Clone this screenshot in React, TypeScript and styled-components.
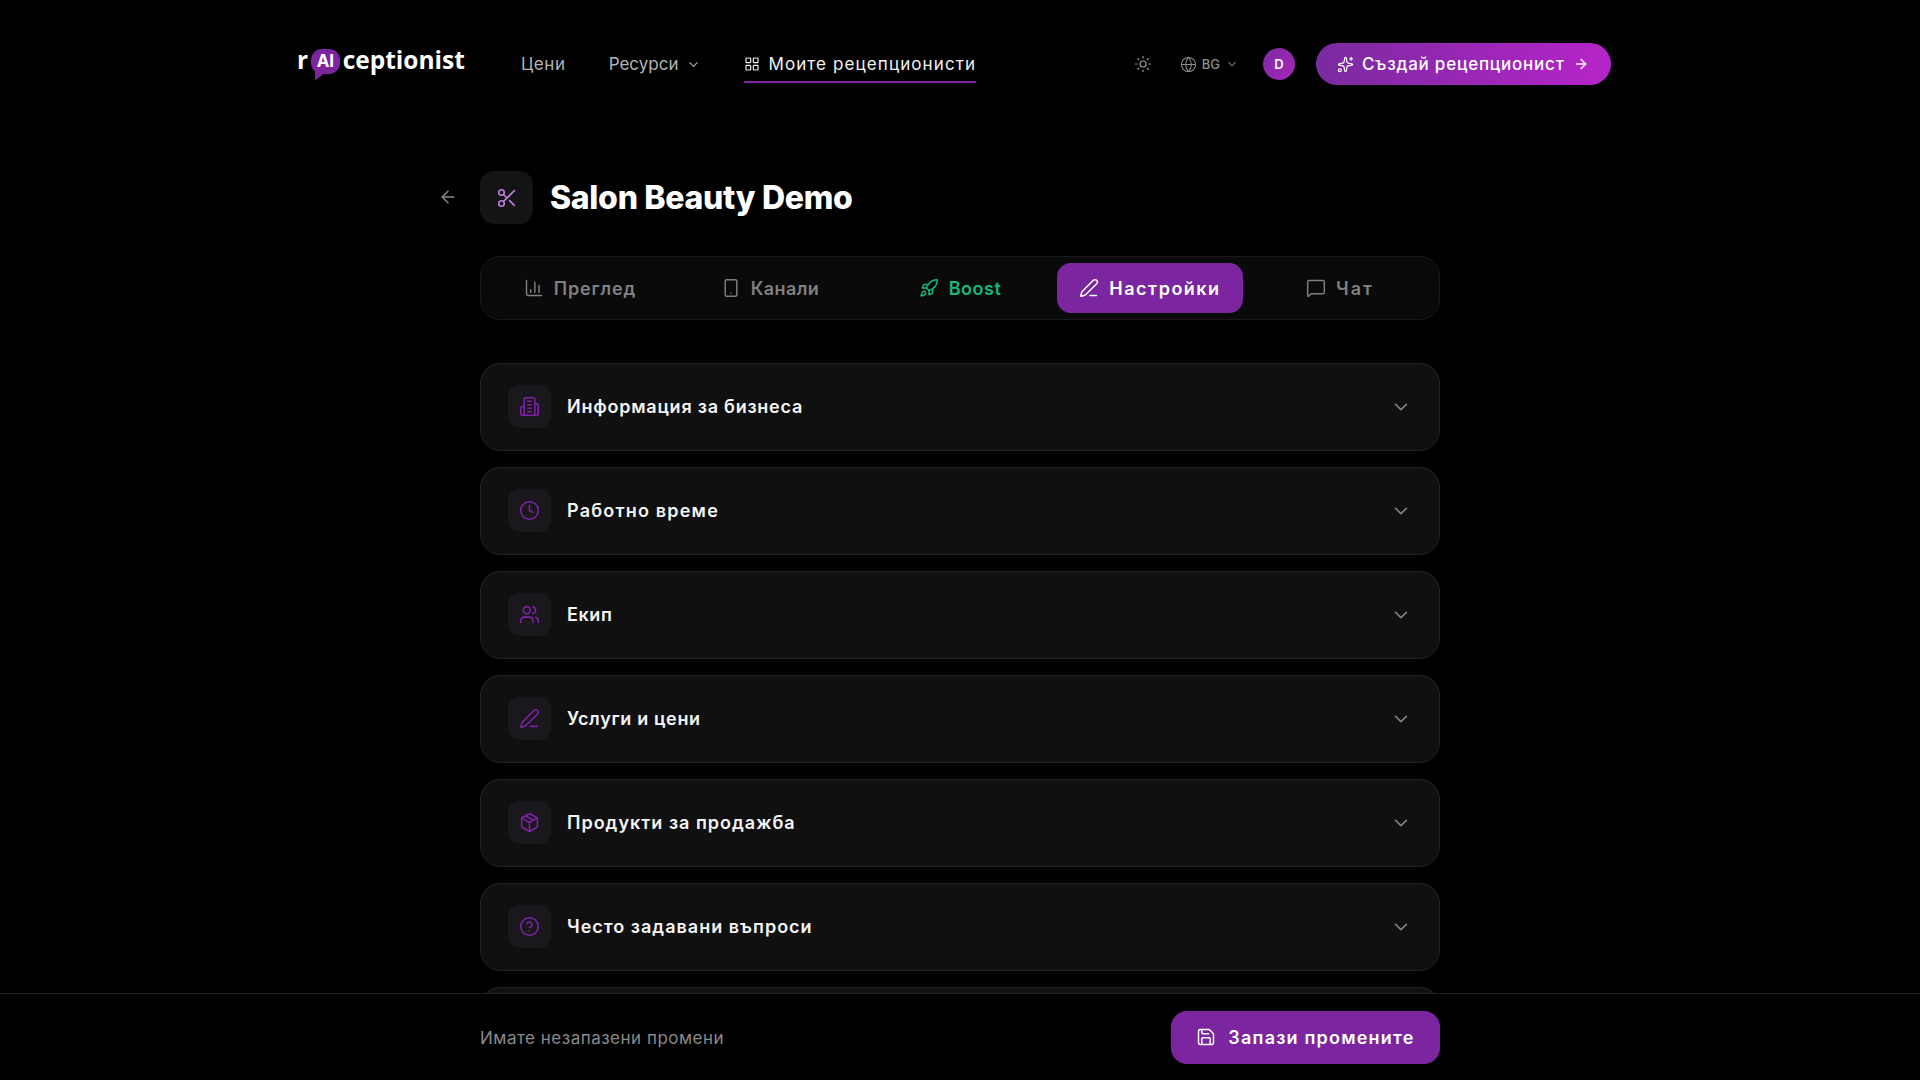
import React from "react";
import styled, { createGlobalStyle } from "styled-components";
import {
  ArrowLeft, ArrowRight, ChartColumn, ChevronDown, CircleHelp, Clock, Globe,
  LayoutGrid, MessageSquare, Package, PenLine, Rocket, Save, Scissors, Smartphone,
  Sparkles, Sun, Users,
} from "lucide-react";

const Global = createGlobalStyle`
  html, body { margin: 0; height: 100%; overflow: hidden; background: #000; }
  body { font-family: Inter, "Noto Sans", sans-serif; color: #fff; -webkit-font-smoothing: antialiased; }
  * { box-sizing: border-box; }
`;

const Page = styled.div`
  height: 1080px;
  overflow: hidden;
  background: #000;
`;

const Header = styled.header`
  display: flex;
  align-items: center;
  height: 128px;
  padding: 0 309px 0 297px;
`;

const Logo = styled.div`
  display: flex;
  flex: none;
  align-items: center;
  width: 166px;
  margin-right: 58px;
  font-family: "Open Sans", sans-serif;
  font-weight: 700;
  font-size: 24.5px;
  line-height: 1;
  color: #fff;
  transform: translateY(-4px);
`;

const LogoBubble = styled.span`
  position: relative;
  display: inline-flex;
  flex: none;
  align-items: center;
  justify-content: center;
  width: 28.5px;
  height: 25px;
  margin: 2px 3px 0 3px;
  border-radius: 11px;
  background: #7d249f;
  font-family: Inter, sans-serif;
  font-size: 17px;
  font-weight: 700;
  &::after {
    content: "";
    position: absolute;
    left: 4px;
    bottom: -7px;
    width: 9px;
    height: 10px;
    background: #7d249f;
    clip-path: polygon(0 0, 100% 30%, 0 100%);
  }
`;

const Nav = styled.nav`
  display: flex;
  align-items: center;
  gap: 43px;
  flex: 1;
`;

const NavLink = styled.a<{ $active?: boolean; $ls?: number }>`
  position: relative;
  display: flex;
  align-items: center;
  gap: 8px;
  font-size: 17px;
  line-height: 24px;
  letter-spacing: ${(p) => p.$ls ?? 0}px;
  color: ${(p) => (p.$active ? "#f2f2f2" : "#b3b3b3")};
  ${(p) =>
    p.$active &&
    `&::after {
      content: "";
      position: absolute;
      left: 0;
      right: 0;
      bottom: -7px;
      height: 2px;
      background: #7f25a3;
    }`}
`;

const HeaderRight = styled.div`
  display: flex;
  align-items: center;
`;

const ThemeBtn = styled.span`
  display: flex;
  color: #a0a0a0;
  margin-right: 28px;
`;

const Lang = styled.span`
  display: flex;
  align-items: center;
  gap: 5px;
  color: #8c8c8c;
  font-size: 13px;
  font-weight: 500;
  margin-right: 24px;
`;

const Avatar = styled.span`
  display: flex;
  align-items: center;
  justify-content: center;
  width: 32px;
  height: 32px;
  border-radius: 50%;
  background: linear-gradient(135deg, #7c2aa0, #a626bd);
  font-size: 13px;
  font-weight: 600;
  margin-right: 21px;
`;

const CreateBtn = styled.button`
  display: flex;
  align-items: center;
  height: 42px;
  width: 295px;
  padding: 0 21px;
  gap: 8px;
  border: 0;
  border-radius: 21px;
  background: linear-gradient(90deg, #7a2aa0, #b624c9);
  color: #fff;
  font: 500 17px Inter, sans-serif;
  letter-spacing: 0.77px;
  white-space: nowrap;
`;

const Main = styled.main`
  width: 960px;
  margin: 0 auto;
`;

const TitleRow = styled.div`
  position: relative;
  display: flex;
  align-items: center;
  gap: 17px;
  height: 53px;
  margin-top: 43px;
`;

const BackBtn = styled.span`
  position: absolute;
  left: -42px;
  top: 16px;
  display: flex;
  color: #8a8a8a;
`;

const TitleIcon = styled.span`
  display: flex;
  align-items: center;
  justify-content: center;
  width: 53px;
  height: 53px;
  border-radius: 14px;
  background: #141316;
  color: #c07fdc;
`;

const Title = styled.h1`
  margin: 0;
  font-size: 32px;
  font-weight: 800;
  letter-spacing: -0.3px;
  color: #fff;
`;

const Tabs = styled.div`
  display: grid;
  grid-template-columns: repeat(5, 1fr);
  gap: 4px;
  height: 64px;
  margin-top: 32px;
  padding: 6px;
  border: 1px solid #1a1a1a;
  border-radius: 20px;
  background: #0a0a0a;
`;

const Tab = styled.div<{ $active?: boolean; $green?: boolean; $ls?: number }>`
  display: flex;
  align-items: center;
  justify-content: center;
  gap: 10px;
  border-radius: 14px;
  font-size: 18px;
  font-weight: 600;
  letter-spacing: ${(p) => p.$ls ?? 0}px;
  color: ${(p) => (p.$active ? "#fff" : p.$green ? "#10b981" : "#808080")};
  background: ${(p) => (p.$active ? "#7b26a0" : "transparent")};
`;

const Sections = styled.div`
  display: flex;
  flex-direction: column;
  gap: 16px;
  margin-top: 43px;
`;

const Card = styled.section`
  display: flex;
  align-items: center;
  height: 88px;
  flex: none;
  padding: 0 27px;
  border: 1px solid #222;
  border-radius: 20px;
  background: #101010;
`;

const CardIcon = styled.span`
  display: flex;
  align-items: center;
  justify-content: center;
  width: 43px;
  height: 43px;
  margin-right: 16px;
  margin-top: -1px;
  border-radius: 12px;
  background: #1a181c;
  color: #7e22a8;
`;

const CardTitle = styled.span<{ $ls: number }>`
  flex: 1;
  font-size: 18px;
  font-weight: 600;
  letter-spacing: ${(p) => p.$ls}px;
  color: #f5f5f5;
  transform: translateY(-1px);
`;

const Chevron = styled.span`
  display: flex;
  color: #8a8a8a;
`;

const SaveBar = styled.footer`
  position: fixed;
  left: 0;
  right: 0;
  bottom: 0;
  height: 87px;
  background: #000;
  border-top: 1px solid #1f1f1f;
`;

const SaveInner = styled.div`
  display: flex;
  align-items: center;
  justify-content: space-between;
  width: 960px;
  height: 100%;
  margin: 0 auto;
`;

const SaveNote = styled.span`
  padding-top: 2px;
  font-size: 17px;
  letter-spacing: 0.5px;
  color: #8a8a8a;
`;

const SaveBtn = styled.button`
  display: flex;
  align-items: center;
  justify-content: center;
  gap: 12px;
  width: 269px;
  height: 53px;
  border: 0;
  border-radius: 16px;
  background: #7b26a0;
  color: #fff;
  font: 600 18px Inter, sans-serif;
  letter-spacing: 1.2px;
`;

const Building = () => (
  <svg width="21" height="21" viewBox="0 0 24 24" fill="none" stroke="currentColor" strokeWidth="1.75" strokeLinecap="round" strokeLinejoin="round">
    <path d="M6 22V4a2 2 0 0 1 2-2h8a2 2 0 0 1 2 2v18Z" />
    <path d="M6 12H4a2 2 0 0 0-2 2v6a2 2 0 0 0 2 2h2" />
    <path d="M18 9h2a2 2 0 0 1 2 2v9a2 2 0 0 1-2 2h-2" />
    <path d="M10 6h4M10 10h4M10 14h4M10 18h4" />
  </svg>
);

const iconProps = { size: 21, strokeWidth: 1.75 };

const sections = [
  { icon: <Building />, title: "Информация за бизнеса", ls: 0.75 },
  { icon: <Clock {...iconProps} />, title: "Работно време", ls: 1.2 },
  { icon: <Users {...iconProps} />, title: "Екип", ls: 0.6 },
  { icon: <PenLine {...iconProps} />, title: "Услуги и цени", ls: 0.65 },
  { icon: <Package {...iconProps} />, title: "Продукти за продажба", ls: 1 },
  { icon: <CircleHelp {...iconProps} />, title: "Често задавани въпроси", ls: 1 },
];

export default function App() {
  return (
    <Page lang="bg">
      <Global />
      <Header>
        <Logo lang="en">
          r<LogoBubble>AI</LogoBubble>ceptionist
        </Logo>
        <Nav>
          <NavLink $ls={0.6}>Цени</NavLink>
          <NavLink>
            Ресурси <ChevronDown size={15} strokeWidth={1.75} />
          </NavLink>
          <NavLink $active $ls={1.1}>
            <LayoutGrid size={16} strokeWidth={1.75} /> Моите рецепционисти
          </NavLink>
        </Nav>
        <HeaderRight>
          <ThemeBtn><Sun size={18} strokeWidth={1.5} /></ThemeBtn>
          <Lang>
            <Globe size={17} strokeWidth={1.5} /> BG <ChevronDown size={14} strokeWidth={1.75} />
          </Lang>
          <Avatar>D</Avatar>
          <CreateBtn>
            <Sparkles size={17} strokeWidth={1.75} /> Създай рецепционист <ArrowRight size={16} strokeWidth={2} />
          </CreateBtn>
        </HeaderRight>
      </Header>
      <Main>
        <TitleRow>
          <BackBtn><ArrowLeft size={20} strokeWidth={1.75} /></BackBtn>
          <TitleIcon><Scissors size={22} strokeWidth={1.75} /></TitleIcon>
          <Title>Salon Beauty Demo</Title>
        </TitleRow>
        <Tabs>
          <Tab $ls={0.87}><ChartColumn size={20} strokeWidth={1.75} /> Преглед</Tab>
          <Tab $ls={0.4}><Smartphone size={20} strokeWidth={1.75} /> Канали</Tab>
          <Tab $green $ls={0.5}><Rocket size={20} strokeWidth={1.75} /> Boost</Tab>
          <Tab $active $ls={1.5}><PenLine size={20} strokeWidth={1.75} /> Настройки</Tab>
          <Tab $ls={2}><MessageSquare size={20} strokeWidth={1.75} /> Чат</Tab>
        </Tabs>
        <Sections>
          {sections.map((s) => (
            <Card key={s.title}>
              <CardIcon>{s.icon}</CardIcon>
              <CardTitle $ls={s.ls}>{s.title}</CardTitle>
              <Chevron><ChevronDown size={22} strokeWidth={1.75} /></Chevron>
            </Card>
          ))}
          <Card />
        </Sections>
      </Main>
      <SaveBar>
        <SaveInner>
          <SaveNote>Имате незапазени промени</SaveNote>
          <SaveBtn><Save size={20} strokeWidth={1.75} /> Запази промените</SaveBtn>
        </SaveInner>
      </SaveBar>
    </Page>
  );
}
